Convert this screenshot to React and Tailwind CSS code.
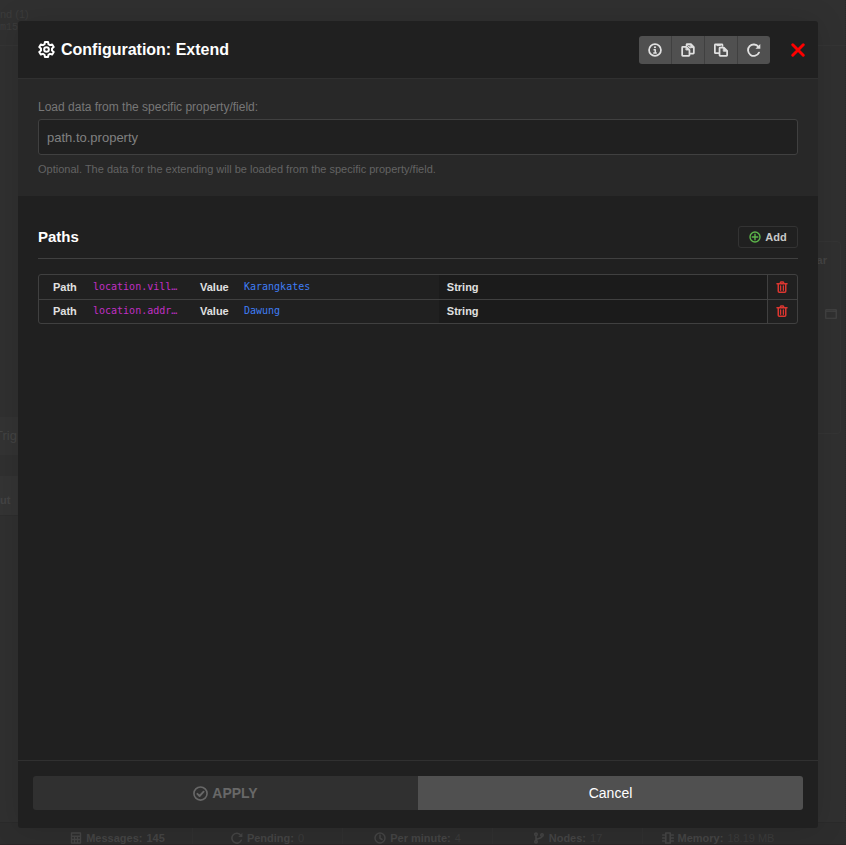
import React from "react";

function Icon({ className, children, stroke = 2.4 }) {
  return (
    <svg
      className={className}
      viewBox="0 0 24 24"
      fill="none"
      stroke="currentColor"
      strokeWidth={stroke}
      strokeLinecap="round"
      strokeLinejoin="round"
      aria-hidden="true"
    >
      {children}
    </svg>
  );
}

const CogIcon = ({ className }) => (
  <Icon className={className} stroke={2.8}>
    <path d="M9.800 1.500h4.400l.600 3.100 2.200 1.300 3-1.100 2.200 3.800-2.400 2.100v2.600l2.400 2.100-2.200 3.800-3-1.100-2.200 1.300-.600 3.100H9.800l-.600-3.100L7 18.100l-3 1.100-2.200-3.800 2.400-2.100v-2.600L1.800 8.600 4 4.800l3 1.100 2.200-1.300z" />
    <circle cx="12" cy="12" r="3.300" />
  </Icon>
);

const InfoIcon = ({ className }) => (
  <Icon className={className}>
    <circle cx="12" cy="12" r="10.200" strokeWidth="3" />
    <path d="M9.500 11.500h3v5M9 17h6" strokeWidth="2.600" strokeLinecap="butt" />
    <circle cx="12" cy="7.300" r="1.900" fill="currentColor" stroke="none" />
  </Icon>
);

const CopyIcon = ({ className }) => (
  <Icon className={className} stroke={3}>
    <path d="M9.500 4V3q0-1 1-1H17l5 5v10q0 1-1 1h-5" />
    <path d="M2 7.500q0-1 1-1h6l5.500 5.500v9q0 1-1 1H3q-1 0-1-1z" />
    <path d="M9 7l5 5H9zM16 2.500L21.500 8H16z" fill="currentColor" strokeWidth="1.400" />
    <path d="M11.500 4.500l4 4" strokeWidth="2" />
  </Icon>
);

const PasteIcon = ({ className }) => (
  <Icon className={className} stroke={3}>
    <path d="M8 17.500H2.500q-1 0-1-1v-13q0-1 1-1h11q1 0 1 1v1.500" />
    <path d="M9.500 9q0-1 1-1H17l5.500 5.500V21q0 1-1 1h-11q-1 0-1-1z" />
    <path d="M16.500 8.500L22 14h-5.500zM5.500 2.500h5.500v2H5.500z" fill="currentColor" strokeWidth="1.600" />
  </Icon>
);

const RedoIcon = ({ className }) => (
  <Icon className={className} stroke={3.2}>
    <path d="M20.500 16.500A9.800 9.800 0 1 1 19.500 6.500" />
    <path d="M22.800 1.500v8.300h-8.300z" fill="currentColor" stroke="none" />
  </Icon>
);

const TimesIcon = ({ className }) => (
  <Icon className={className} stroke={5}>
    <path d="M3 3l18 18M21 3L3 21" />
  </Icon>
);

const PlusCircleIcon = ({ className }) => (
  <Icon className={className} stroke={2.8}>
    <circle cx="12" cy="12" r="10" />
    <path d="M12 6.500v11M6.500 12h11" />
  </Icon>
);

const TrashIcon = ({ className }) => (
  <Icon className={className} stroke={3}>
    <path d="M2 5.500h20M8 5l1.500-3h5L16 5M4.500 6v14.500q0 2 2 2h11q2 0 2-2V6" />
    <path d="M9.200 10v8.500M14.800 10v8.500" strokeWidth="2.600" />
  </Icon>
);

const CheckCircleIcon = ({ className }) => (
  <Icon className={className} stroke={2.6}>
    <circle cx="12" cy="12" r="10.500" />
    <path d="M7 12.500l3.500 3.500L17 9" strokeWidth="3" />
  </Icon>
);

const CalculatorIcon = ({ className }) => (
  <Icon className={className} stroke={2.8}>
    <path d="M3 2h18v20H3zM3 8.500h18M9 9v13M15 9v13M3 15h18" />
  </Icon>
);

const ClockIcon = ({ className }) => (
  <Icon className={className} stroke={3}>
    <circle cx="12" cy="12" r="10" />
    <path d="M12 6v6.500l4 2.500" />
  </Icon>
);

const BranchIcon = ({ className }) => (
  <Icon className={className} stroke={3.2}>
    <circle cx="6" cy="4.500" r="2.500" />
    <circle cx="6" cy="19.500" r="2.500" />
    <circle cx="18" cy="6" r="2.500" />
    <path d="M6 7v10M18 8.500c0 6-12 3-12 8" />
  </Icon>
);

const ChipIcon = ({ className }) => (
  <Icon className={className} stroke={3.4}>
    <path d="M7.500 2h9v20h-9zM1.500 6h3M1.500 12h3M1.500 18h3M19.500 6h3M19.500 12h3M19.500 18h3" />
  </Icon>
);

const WindowIcon = ({ className }) => (
  <Icon className={className} stroke={2.4}>
    <path d="M1.500 3.500h21v17h-21zM2 6.500h20" />
  </Icon>
);

const stats = [
  { icon: CalculatorIcon, label: "Messages:", value: "145", strong: true },
  { icon: RedoIcon, label: "Pending:", value: "0" },
  { icon: ClockIcon, label: "Per minute:", value: "4" },
  { icon: BranchIcon, label: "Nodes:", value: "17" },
  { icon: ChipIcon, label: "Memory:", value: "18.19 MB" },
];

const tools = [
  { label: "Information", icon: InfoIcon },
  { label: "Copy", icon: CopyIcon },
  { label: "Paste", icon: PasteIcon },
  { label: "Reload", icon: RedoIcon },
];

const rows = [
  { path: "location.vill…", value: "Karangkates", type: "String" },
  { path: "location.addr…", value: "Dawung", type: "String" },
];

function Backdrop() {
  return (
    <div className="absolute inset-0 overflow-hidden bg-[#303030] text-[#444444]" aria-hidden="true">
      <div className="absolute left-0 top-0 h-[46px] w-full border-b border-[#343434]" />
      <div className="absolute left-0 top-2 text-[11px] leading-3 text-[#3c3c3c]">nd (1)</div>
      <div className="absolute left-0 top-[22px] font-['Liberation_Mono',monospace] text-[10px] leading-3 text-[#3c3c3c]">
        m15
      </div>
      <div className="absolute left-0 top-[417px] h-[38px] w-5 bg-[#333333] text-[13px] leading-[38px]">
        <span className="absolute -left-[5px]">Trig</span>
      </div>
      <div className="absolute left-0 top-[476px] h-10 w-5 border-b border-[#2d2d2d] bg-[#343434] text-[11px] font-bold leading-[48px]">
        ut
      </div>
      <div className="absolute right-[5px] top-[241px] h-[193px] w-40 rounded-sm border border-[#343434]" />
      <div className="absolute right-[19px] top-[254px] text-[11px] font-bold leading-3">ar</div>
      <WindowIcon className="absolute right-[9px] top-[308px] size-3" />
      <div className="absolute right-0 top-0 h-full border-r border-dotted border-[#282828]" />
      <div className="absolute inset-x-0 bottom-0 flex h-[23px] justify-center border-b border-t border-b-[#2a2526] border-t-[#2a2a2a] bg-[#2d2d2d] pr-[10px] text-[11px]">
        {stats.map(({ icon: StatIcon, label, value, strong }) => (
          <div key={label} className="flex w-[150px] items-end justify-center gap-1 border-r border-[#303030] leading-3 last:border-r-0">
            <StatIcon className="size-3" />
            <b>{label}</b>
            <span className={strong ? "font-bold" : "text-[#3a3a3a]"}>{value}</span>
          </div>
        ))}
      </div>
    </div>
  );
}

function PathRow({ path, value, type }) {
  return (
    <tr className="h-6 border-t border-[#404040] first:border-t-0">
      <th scope="row" className="w-[54px] pl-[14px] text-left font-bold">Path</th>
      <td className="w-[107px] font-['DejaVu_Sans_Mono',monospace] text-[10px] text-[#c12fc4]">{path}</td>
      <th scope="row" className="w-11 text-left font-bold">Value</th>
      <td className="font-['DejaVu_Sans_Mono',monospace] text-[10px] text-[#3f7df5]">{value}</td>
      <td className="w-[43.3%] bg-[#1b1b1b] pl-2 font-bold">{type}</td>
      <td className="w-[30px] border-l border-[#404040] align-middle">
        <button type="button" aria-label={`Remove ${value}`} className="flex h-[22px] w-full items-center justify-center text-[#dc3630]">
          <TrashIcon className="size-3" />
        </button>
      </td>
    </tr>
  );
}

export default function App() {
  return (
    <div className="relative flex min-h-screen flex-col bg-[#303030] pb-[17px] pl-[18px] pr-7 pt-[21px] font-['Liberation_Sans',Arial,sans-serif]">
      <Backdrop />
      <section
        role="dialog"
        aria-labelledby="dialog-title"
        className="relative flex flex-1 flex-col rounded-[3px] bg-[#202020] text-white shadow-[0_0_30px_rgba(0,0,0,0.12)]"
      >
        <header className="flex h-[58px] items-center border-b border-[#303030] pl-5 pr-[13px]">
          <CogIcon className="mr-[6px] size-[17px]" />
          <h1 id="dialog-title" className="flex-1 text-base font-bold">Configuration: Extend</h1>
          <div className="flex overflow-hidden rounded-[3px] bg-[#505050]">
            {tools.map(({ label, icon: ToolIcon }) => (
              <button
                key={label}
                type="button"
                aria-label={label}
                className="flex h-7 w-[33px] items-center justify-center border-r border-[#404040] text-[#e0e0e0] last:w-8 last:border-r-0"
              >
                <ToolIcon className="size-[14px]" />
              </button>
            ))}
          </div>
          <button type="button" aria-label="Close" className="ml-5 flex size-[15px] items-center justify-center text-[#f00]">
            <TimesIcon className="size-[14px]" />
          </button>
        </header>

        <div className="border-b border-[#202020] bg-[#282828] px-5 pb-[19px] pt-5">
          <label htmlFor="property" className="block text-xs leading-4 text-[#777777]">
            Load data from the specific property/field:
          </label>
          <input
            id="property"
            type="text"
            placeholder="path.to.property"
            className="mt-1 block h-9 w-full rounded-[3px] border border-[#404040] bg-[#202020] px-2 text-[13px] text-white outline-none placeholder:text-[#808080]"
          />
          <p className="mt-[6px] text-[11px] leading-4 text-[#636363]">
            Optional. The data for the extending will be loaded from the specific property/field.
          </p>
        </div>

        <div className="flex-1 px-5 pt-[29px]">
          <div className="flex items-start justify-between border-b border-[#404040] pb-[10px]">
            <h2 className="text-[15px] font-bold leading-[22px]">Paths</h2>
            <button
              type="button"
              className="flex h-[22px] w-[60px] items-center justify-center gap-1 rounded-[3px] border border-[#333333] text-[11px] font-bold text-[#c8c8c8]"
            >
              <PlusCircleIcon className="size-3 text-[#5cb54a]" />
              Add
            </button>
          </div>
          <div className="mt-[15px] overflow-hidden rounded-[3px] border border-[#404040]">
            <table className="w-full table-fixed border-collapse text-[11px] leading-4 text-[#e0e0e0]">
              <tbody>
                {rows.map((row) => (
                  <PathRow key={row.path} {...row} />
                ))}
              </tbody>
            </table>
          </div>
        </div>

        <footer className="flex border-t border-[#303030] px-[15px] pb-[18px] pt-[15px]">
          <button
            type="button"
            className="flex h-[34px] flex-1 items-center justify-center gap-1 rounded-l-[3px] bg-[#303030] text-sm font-bold text-[#686868]"
          >
            <CheckCircleIcon className="size-[15px]" />
            APPLY
          </button>
          <button type="button" className="h-[34px] flex-1 rounded-r-[3px] bg-[#505050] text-sm text-white">
            Cancel
          </button>
        </footer>
      </section>
    </div>
  );
}
